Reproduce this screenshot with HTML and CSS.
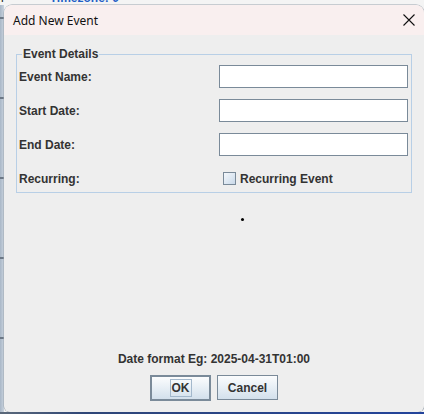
FILE: index.html
```html
<!DOCTYPE html>
<html>
<head>
<meta charset="utf-8">
<link rel="stylesheet" href="styles.css">
</head>
<body>
<div class="desk">
  <div class="bg-top"><span class="bg-n">n</span><span class="bg-tz">Timezone: 0</span></div>
  <div class="bg-left"></div>
  <div class="dialog">
    <div class="titlebar">
      <span class="title">Add New Event</span>
      <svg class="close" width="12" height="12" viewBox="0 0 12 12"><path d="M0.5 0.5L11.5 11.5M11.5 0.5L0.5 11.5" stroke="#111" stroke-width="1.1" fill="none"/></svg>
    </div>
    <div class="content">
      <fieldset class="group">
        <legend class="legend">Event Details</legend>
        <div class="form">
          <label class="lbl">Event Name:</label>
          <input class="field" type="text">
          <label class="lbl">Start Date:</label>
          <input class="field" type="text">
          <label class="lbl">End Date:</label>
          <input class="field" type="text">
          <label class="lbl">Recurring:</label>
          <div class="check"><span class="box"></span><span class="lbl">Recurring Event</span></div>
        </div>
      </fieldset>
      <div class="middle"><span class="dot"></span></div>
      <div class="hint">Date format Eg: 2025-04-31T01:00</div>
      <div class="buttons">
        <button class="btn btn-default"><span class="focus">OK</span></button>
        <button class="btn">Cancel</button>
      </div>
    </div>
  </div>
  <div class="bg-bottom"></div>
</div>
</body>
</html>
```

FILE: styles.css
```css
html, body {
  margin: 0;
  padding: 0;
}
body {
  width: 424px;
  height: 414px;
  overflow: hidden;
  background: #f3f3f3;
}
.desk {
  display: grid;
  grid-template-columns: 4px 420px;
  grid-template-rows: 5px 407px 2px;
  width: 424px;
  height: 414px;
  overflow: hidden;
  background: #f3f3f3;
}
.bg-top {
  grid-column: 1 / 3;
  height: 5px;
  overflow: hidden;
  background: #f4f4f4;
  font-family: "Liberation Sans", Arial, sans-serif;
  font-size: 12px;
  line-height: 14px;
  display: flex;
}
.bg-n {
  margin-top: -9px;
  margin-left: -3px;
  color: #222;
}
.bg-tz {
  margin-top: -9px;
  margin-left: 46px;
  color: #1f5fc6;
  font-weight: bold;
}
.bg-left {
  background:
    repeating-linear-gradient(to bottom, transparent 0 12px, #6c7886 12px 14px, transparent 14px 80px),
    linear-gradient(to right, #a9b7c7, #c9d3de);
}
.bg-bottom {
  grid-column: 1 / 3;
  background: linear-gradient(to right, #5b6979 0, #2f4677 20%, #23449b 100%);
}
.dialog {
  display: flex;
  flex-direction: column;
  border-radius: 8px 8px 6px 6px;
  overflow: hidden;
  background: #eeeeee;
  box-shadow: 0 0 0 0.5px #9aa4ae;
}
.titlebar {
  height: 30px;
  flex: none;
  display: flex;
  align-items: center;
  justify-content: space-between;
  padding: 0 9px 0 9px;
  background: #f9efef;
  box-sizing: border-box;
}
.title {
  font-family: "Noto Sans", "Segoe UI", sans-serif;
  font-size: 12px;
  color: #111;
  margin-top: 0px;
}
.close {
  display: block;
  margin-right: 0px;
}
.content {
  flex: 1;
  display: flex;
  flex-direction: column;
  padding: 12px 12px 11px 12px;
  font-family: "Liberation Sans", Arial, sans-serif;
  font-size: 12px;
  font-weight: bold;
  color: #333333;
}
.group {
  margin: 0;
  padding: 2px 3px 2px 2px;
  border: 1px solid #b8cfe6;
  min-width: 0;
}
.legend {
  padding: 0 1px;
  margin-left: 3px;
  line-height: 14px;
  font-size: 12px;
  font-weight: bold;
  color: #333333;
}
.form {
  display: grid;
  grid-template-columns: 200px 189px;
  grid-auto-rows: 23px;
  row-gap: 11px;
  align-items: center;
  padding-top: 2px;
}
.lbl {
  font-size: 12px;
  font-weight: bold;
  color: #333333;
  line-height: 14px;
}
.field {
  box-sizing: border-box;
  width: 189px;
  height: 23px;
  margin: 0;
  padding: 0;
  border: 1px solid #7a8a99;
  background: #ffffff;
  outline: none;
}
.check {
  display: flex;
  align-items: center;
  gap: 4px;
  padding-left: 4px;
}
.box {
  width: 13px;
  height: 13px;
  box-sizing: border-box;
  border: 1px solid #7a8a99;
  background: linear-gradient(135deg, #f4f7fb 0%, #dbe6f1 60%, #c9d8e8 100%);
}
.middle {
  flex: 1;
  padding-top: 25px;
  padding-left: 225px;
}
.dot {
  display: block;
  width: 3px;
  height: 3px;
  border-radius: 50%;
  background: #000;
}
.hint {
  text-align: center;
  line-height: 14px;
  margin-bottom: 9px;
}
.buttons {
  display: flex;
  justify-content: center;
  align-items: flex-start;
  gap: 6px;
}
.btn {
  box-sizing: border-box;
  width: 61px;
  height: 25px;
  margin: 0;
  padding: 0;
  border: 1px solid #7a8a99;
  background: linear-gradient(to bottom, #fbfcfd 0%, #e9f0f6 45%, #d3e0ec 100%);
  font-family: "Liberation Sans", Arial, sans-serif;
  font-size: 12px;
  font-weight: bold;
  color: #333333;
  display: flex;
  align-items: center;
  justify-content: center;
}
.btn-default {
  height: 26px;
  border: 2px solid #7a8a99;
}
.focus {
  display: block;
  padding: 1px 1px;
  border: 1px solid #a3b8cc;
  line-height: 14px;
}
```
